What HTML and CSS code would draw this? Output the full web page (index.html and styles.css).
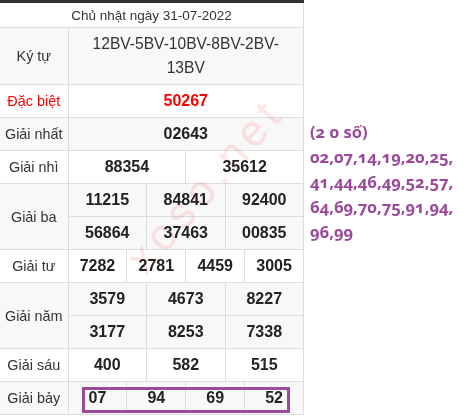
FILE: index.html
```html
<!DOCTYPE html>
<html lang="vi">
<head>
<meta charset="utf-8">
<title>Kết quả xổ số</title>
<link rel="stylesheet" href="styles.css">
</head>
<body>
<div class="page">
  <div class="result">
    <table class="kq">
      <colgroup><col class="c-label"><col span="12"></colgroup>
      <thead>
        <tr><th colspan="13" class="title">Chủ nhật ngày 31-07-2022</th></tr>
      </thead>
      <tbody>
        <tr class="alt"><td class="label">Ký tự</td><td colspan="12" class="code">12BV-5BV-10BV-8BV-2BV-13BV</td></tr>
        <tr><td class="label red">Đặc biệt</td><td colspan="12" class="num red">50267</td></tr>
        <tr class="alt"><td class="label">Giải nhất</td><td colspan="12" class="num">02643</td></tr>
        <tr><td class="label">Giải nhì</td><td colspan="6" class="num">88354</td><td colspan="6" class="num">35612</td></tr>
        <tr class="alt"><td class="label" rowspan="2">Giải ba</td><td colspan="4" class="num">11215</td><td colspan="4" class="num">84841</td><td colspan="4" class="num">92400</td></tr>
        <tr class="alt"><td colspan="4" class="num">56864</td><td colspan="4" class="num">37463</td><td colspan="4" class="num">00835</td></tr>
        <tr><td class="label">Giải tư</td><td colspan="3" class="num">7282</td><td colspan="3" class="num">2781</td><td colspan="3" class="num">4459</td><td colspan="3" class="num">3005</td></tr>
        <tr class="alt"><td class="label" rowspan="2">Giải năm</td><td colspan="4" class="num">3579</td><td colspan="4" class="num">4673</td><td colspan="4" class="num">8227</td></tr>
        <tr class="alt"><td colspan="4" class="num">3177</td><td colspan="4" class="num">8253</td><td colspan="4" class="num">7338</td></tr>
        <tr><td class="label">Giải sáu</td><td colspan="4" class="num">400</td><td colspan="4" class="num">582</td><td colspan="4" class="num">515</td></tr>
        <tr class="alt"><td class="label">Giải bảy</td><td colspan="3" class="num">07</td><td colspan="3" class="num">94</td><td colspan="3" class="num">69</td><td colspan="3" class="num">52</td></tr>
      </tbody>
    </table>
    <div class="watermark">xoso.net</div>
    <div class="highlight"></div>
  </div>
  <div class="side">
    <div>(2 0 số)</div>
    <div>02,07,14,19,20,25,</div>
    <div>41,44,46,49,52,57,</div>
    <div>64,69,70,75,91,94,</div>
    <div>96,99</div>
  </div>
</div>
</body>
</html>
```
FILE: styles.css
```css
html, body {
  margin: 0;
  padding: 0;
  background: #fff;
}

body {
  font-family: "Liberation Sans", Arial, sans-serif;
  color: #333;
}

.page {
  display: flex;
  align-items: flex-start;
}

.result {
  position: relative;
  width: 304px;
  flex: none;
}

.kq {
  width: 304px;
  border-collapse: collapse;
  table-layout: fixed;
  border-right: 1px solid #999;
  border-bottom: 1px solid #999;
}

.c-label {
  width: 68px;
}

.kq th,
.kq td {
  border: 1px solid #ddd;
  padding: 0;
  text-align: center;
  vertical-align: middle;
  height: 32px;
}

.kq tr > :first-child {
  border-left: 0;
}

.kq .title {
  border-top: 3px solid #333;
  font-weight: normal;
  font-size: 13.5px;
  height: 24px;
  color: #333;
}

.alt td {
  background: #f8f8f8;
}

.label {
  font-size: 14.4px;
  color: #333;
}

.code {
  font-size: 15.6px;
  line-height: 24px;
  padding: 4px 12px !important;
  color: #333;
}

.num {
  font-size: 16px;
  font-weight: bold;
  color: #222;
}

.red {
  color: #f00 !important;
}

.highlight {
  position: absolute;
  left: 82px;
  top: 387px;
  width: 202px;
  height: 20px;
  border: 3px solid #9c4a9e;
}

.watermark {
  position: absolute;
  left: 95px;
  top: 160px;
  width: 220px;
  text-align: center;
  font-size: 44px;
  letter-spacing: 6px;
  color: #ffe6e6;
  transform: rotate(-49deg);
  mix-blend-mode: multiply;
  pointer-events: none;
}

.side {
  margin: 119px 0 0 6px;
  font-family: "Open Sans", "Noto Sans", sans-serif;
  font-weight: 700;
  font-size: 16.6px;
  line-height: 25px;
  color: #9b4a9b;
  font-variant-numeric: oldstyle-nums;
  white-space: nowrap;
}
```
